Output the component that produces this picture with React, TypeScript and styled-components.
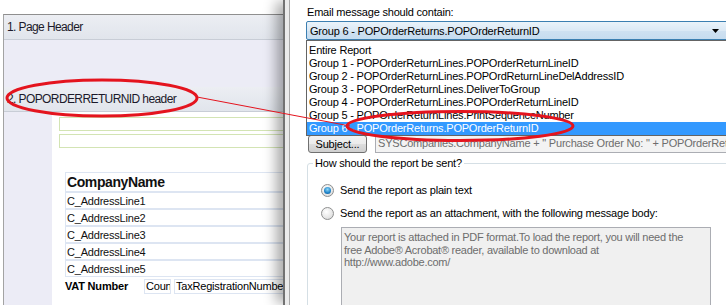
import React from 'react';
import styled, { createGlobalStyle } from 'styled-components';

const GlobalStyle = createGlobalStyle`
  html, body {
    margin: 0;
    padding: 0;
    background: #ffffff;
    overflow: hidden;
  }
  body {
    font-family: "Liberation Sans", Arial, sans-serif;
  }
  * {
    box-sizing: border-box;
  }
`;

const Screen = styled.div`
  position: relative;
  display: flex;
  width: 726px;
  height: 305px;
  overflow: hidden;
  background: #ffffff;
`;

// report designer, partly hidden behind the dialog
const Designer = styled.div`
  flex: 0 0 283px;
  padding: 14px 0 0 3px;
  overflow: hidden;
`;

const Surface = styled.div`
  width: 330px;
  height: 100%;
  display: flex;
  flex-direction: column;
  border-top: 1px solid #8f8f8f;
  border-left: 1px solid #a3a3a3;
`;

const Band = styled.div`
  flex: 0 0 25px;
  display: flex;
  align-items: center;
  padding-left: 3px;
  background: linear-gradient(#eceef3, #e1e5ec);
  border-bottom: 1px solid #c8cdd6;
  font-size: 12px;
  letter-spacing: -0.6px;
  color: #1c1a2a;
`;

const BandArea = styled.div`
  flex: 0 0 47px;
  background: #ececf6;
`;

const Section = styled.div`
  flex: 1;
  display: flex;
`;

const Gutter = styled.div`
  flex: 0 0 48px;
  background: #ececf6;
`;

const Canvas = styled.div`
  flex: 1;
  background: #ffffff;
  padding: 5px 0 0 7px;
`;

const GreenField = styled.div`
  height: 14px;
  margin-bottom: 3px;
  border: 1px solid #d3e4b4;
  background: #ffffff;
`;

const Fields = styled.div`
  margin: 24px 0 0 6px;
`;

const Field = styled.div<{ $heading?: boolean }>`
  height: ${(p) => (p.$heading ? 20 : 17)}px;
  display: flex;
  align-items: center;
  padding-left: 1px;
  border: 1px solid #dde5f2;
  font-size: ${(p) => (p.$heading ? 14 : 11)}px;
  font-weight: ${(p) => (p.$heading ? 700 : 400)};
  letter-spacing: ${(p) => (p.$heading ? -0.4 : -0.2)}px;
  color: #111111;
  white-space: nowrap;
  overflow: hidden;
`;

const VatRow = styled.div`
  display: flex;
  align-items: center;
  height: 16px;
  margin-top: 1px;
  font-size: 11px;
  letter-spacing: -0.2px;
  white-space: nowrap;
`;

const VatLabel = styled.span`
  flex: 0 0 79px;
  font-weight: 700;
`;

const SmallField = styled.div<{ $width?: number }>`
  flex: 0 0 ${(p) => (p.$width ? `${p.$width}px` : 'auto')};
  height: 15px;
  margin-right: 3px;
  padding-left: 1px;
  border: 1px solid #dde5f2;
  line-height: 13px;
  overflow: hidden;
`;

// email options dialog
const Dialog = styled.div`
  flex: 1;
  position: relative;
  z-index: 1;
  display: flex;
  background: #ffffff;
  box-shadow: -9px 0 12px -2px rgba(0, 0, 0, 0.33);
`;

const Frame = styled.div`
  flex: 0 0 7px;
  background: #ebebeb;
  border-left: 2px solid #727272;
  border-right: 1px solid #a9a9a9;
`;

const Body = styled.div`
  flex: 1;
  min-width: 0;
  padding: 5px 0 0 16px;
  font-size: 11px;
  letter-spacing: -0.2px;
  color: #000000;
`;

const Label = styled.div`
  line-height: 14px;
  padding-left: 1px;
`;

const ComboWrap = styled.div`
  position: relative;
  width: 424px;
  margin-top: 2px;
`;

const Combo = styled.div`
  height: 19px;
  display: flex;
  align-items: center;
  justify-content: space-between;
  padding: 1px 10px 0 3px;
  border: 1px solid #3c7fb1;
  border-radius: 2px;
  background: linear-gradient(#eaf3fa, #dbe9f5 50%, #cfe1f1 51%, #c6dcef);
  white-space: nowrap;
`;

const List = styled.div`
  position: absolute;
  top: 100%;
  left: 0;
  right: 0;
  z-index: 2;
  padding-top: 3px;
  border: 1px solid #646464;
  background: #ffffff;
`;

const Option = styled.div<{ $selected?: boolean }>`
  height: 13px;
  line-height: 13px;
  padding-left: 2px;
  white-space: nowrap;
  background: ${(p) => (p.$selected ? '#3399ff' : 'transparent')};
  color: ${(p) => (p.$selected ? '#ffffff' : '#000000')};
`;

const SubjectRow = styled.div`
  display: flex;
  margin-top: 95px;
  width: 440px;
`;

const Button = styled.div`
  flex: 0 0 59px;
  height: 18px;
  margin-left: 2px;
  display: flex;
  align-items: center;
  justify-content: center;
  border: 1px solid #707070;
  border-radius: 3px;
  background: linear-gradient(#f2f2f2, #ebebeb 50%, #dddddd 51%, #cfcfcf);
`;

const SubjectInput = styled.div`
  flex: 1;
  height: 18px;
  margin-left: 8px;
  padding: 0 2px;
  border: 1px solid #abadb3;
  background: #f3f3f3;
  color: #6d6d6d;
  line-height: 15px;
  white-space: nowrap;
  overflow: hidden;
`;

const GroupBox = styled.fieldset`
  width: 440px;
  height: 200px;
  margin: 3px 0 0 1px;
  padding: 0;
  border: 1px solid #d5dfe5;
  border-radius: 3px;
`;

const Legend = styled.legend`
  margin-left: 5px;
  padding: 0 2px;
  line-height: 14px;
`;

const Options = styled.div`
  padding-left: 13px;
`;

const RadioRow = styled.div<{ $first?: boolean }>`
  display: flex;
  align-items: center;
  gap: 6px;
  height: 16px;
  margin-top: ${(p) => (p.$first ? 12 : 7)}px;
`;

const Radio = styled.span<{ $checked?: boolean }>`
  flex: 0 0 13px;
  height: 13px;
  display: flex;
  align-items: center;
  justify-content: center;
  border: 1px solid #8e8f8f;
  border-radius: 50%;
  background: radial-gradient(circle at 40% 35%, #ffffff, #e6e6e6 60%, #cfcfcf);

  &::after {
    content: '';
    display: ${(p) => (p.$checked ? 'block' : 'none')};
    width: 7px;
    height: 7px;
    border-radius: 50%;
    background: radial-gradient(circle at 50% 35%, #8fd8f7, #1d82c8 60%, #0b4f8a);
  }
`;

const Message = styled.div`
  width: 370px;
  height: 100px;
  margin: 6px 0 0 20px;
  padding: 3px 2px;
  border: 1px solid #abadb3;
  background: #f0f0f0;
  color: #6d6d6d;
  line-height: 12.5px;
  letter-spacing: -0.25px;
  white-space: nowrap;
`;

const Overlay = styled.svg`
  position: absolute;
  top: 0;
  left: 0;
  z-index: 5;
  pointer-events: none;
`;

const options = [
  'Entire Report',
  'Group 1 - POPOrderReturnLines.POPOrderReturnLineID',
  'Group 2 - POPOrderReturnLines.POPOrdReturnLineDelAddressID',
  'Group 3 - POPOrderReturnLines.DeliverToGroup',
  'Group 4 - POPOrderReturnLines.POPOrderReturnLineID',
  'Group 5 - POPOrderReturnLines.PrintSequenceNumber',
  'Group 6 - POPOrderReturns.POPOrderReturnID',
];

const addressLines = ['C_AddressLine1', 'C_AddressLine2', 'C_AddressLine3', 'C_AddressLine4', 'C_AddressLine5'];

const App: React.FC = () => {
  return (
    <>
      <GlobalStyle />
      <Screen>
        <Designer>
          <Surface>
            <Band>1. Page Header</Band>
            <BandArea />
            <Band>2. POPORDERRETURNID header</Band>
            <Section>
              <Gutter />
              <Canvas>
                <GreenField />
                <GreenField />
                <Fields>
                  <Field $heading>CompanyName</Field>
                  {addressLines.map((line) => (
                    <Field key={line}>{line}</Field>
                  ))}
                  <VatRow>
                    <VatLabel>VAT Number</VatLabel>
                    <SmallField $width={27}>Coun</SmallField>
                    <SmallField>TaxRegistrationNumber</SmallField>
                  </VatRow>
                </Fields>
              </Canvas>
            </Section>
          </Surface>
        </Designer>

        <Dialog>
          <Frame />
          <Body>
            <Label>Email message should contain:</Label>
            <ComboWrap>
              <Combo>
                <span>Group 6 - POPOrderReturns.POPOrderReturnID</span>
                <svg width="7" height="4" viewBox="0 0 7 4">
                  <polygon points="0,0 7,0 3.5,4" fill="#000000" />
                </svg>
              </Combo>
              <List>
                {options.map((opt, i) => (
                  <Option key={opt} $selected={i === options.length - 1}>
                    {opt}
                  </Option>
                ))}
              </List>
            </ComboWrap>

            <SubjectRow>
              <Button>Subject...</Button>
              <SubjectInput>
                SYSCompanies.CompanyName + " Purchase Order No: " + POPOrderReturns.POPOrderReturnID
              </SubjectInput>
            </SubjectRow>

            <GroupBox>
              <Legend>How should the report be sent?</Legend>
              <Options>
                <RadioRow $first>
                  <Radio $checked />
                  <span>Send the report as plain text</span>
                </RadioRow>
                <RadioRow>
                  <Radio />
                  <span>Send the report as an attachment, with the following message body:</span>
                </RadioRow>
                <Message>
                  Your report is attached in PDF format.To load the report, you will need the
                  <br />
                  free Adobe® Acrobat® reader, available to download at
                  <br />
                  http://www.adobe.com/
                </Message>
              </Options>
            </GroupBox>
          </Body>
        </Dialog>

        <Overlay width="726" height="305" viewBox="0 0 726 305">
          <ellipse cx="102" cy="98" rx="95" ry="18" fill="none" stroke="#e4141e" strokeWidth="3" />
          <line x1="197" y1="97" x2="350" y2="126" stroke="#e4141e" strokeWidth="1" />
          <ellipse cx="460" cy="126" rx="113" ry="14.5" fill="none" stroke="#e4141e" strokeWidth="3" />
        </Overlay>
      </Screen>
    </>
  );
};

export default App;
